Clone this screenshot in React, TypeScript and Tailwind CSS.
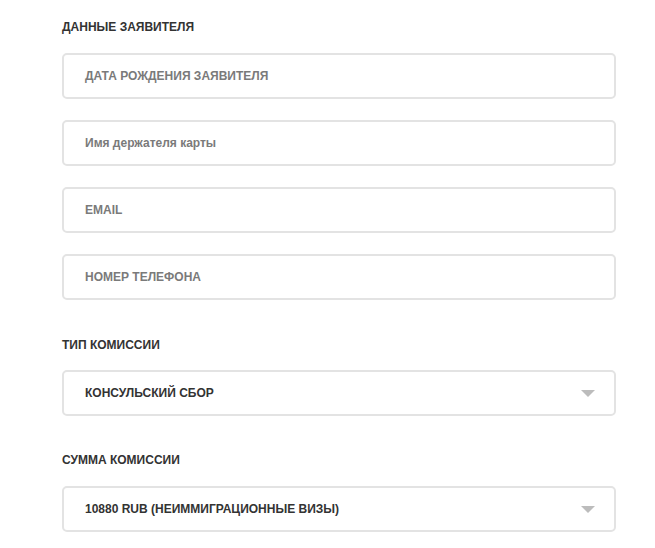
import React from "react";

const font = { fontFamily: '"Liberation Sans", Arial, sans-serif' };

function Heading({ children, className = "" }: { children: React.ReactNode; className?: string }) {
  return (
    <div className={`h-4 leading-4 text-[12px] font-bold text-[#333] uppercase ${className}`}>
      {children}
    </div>
  );
}

function Field({ label }: { label: string }) {
  return (
    <div className="h-[46px] w-[554px] border-2 border-[#e3e3e3] rounded-[5px] bg-white flex items-center pl-[21px] text-[12px] font-bold text-[#7a7a7a]">
      {label}
    </div>
  );
}

function Select({ value }: { value: string }) {
  return (
    <div className="h-[46px] w-[554px] border-2 border-[#e3e3e3] rounded-[5px] bg-white flex items-center justify-between pl-[21px] pr-[19px] text-[12px] font-bold text-[#333]">
      <span>{value}</span>
      <svg width="14" height="7" viewBox="0 0 14 7">
        <polygon points="0,0 14,0 7,7" fill="#bcbcbc" />
      </svg>
    </div>
  );
}

export default function App() {
  return (
    <div className="w-[655px] h-[548px] bg-white overflow-hidden" style={font}>
      <div className="pl-[62px] pt-[19px]">
        <Heading className="mb-[18px]">Данные заявителя</Heading>
        <div className="flex flex-col gap-[21px]">
          <Field label="ДАТА РОЖДЕНИЯ ЗАЯВИТЕЛЯ" />
          <Field label="Имя держателя карты" />
          <Field label="EMAIL" />
          <Field label="НОМЕР ТЕЛЕФОНА" />
        </div>
        <Heading className="mt-[37px] mb-[17px]">Тип комиссии</Heading>
        <Select value="КОНСУЛЬСКИЙ СБОР" />
        <Heading className="mt-[36px] mb-[18px]">Сумма комиссии</Heading>
        <Select value="10880 RUB (НЕИММИГРАЦИОННЫЕ ВИЗЫ)" />
      </div>
    </div>
  );
}
